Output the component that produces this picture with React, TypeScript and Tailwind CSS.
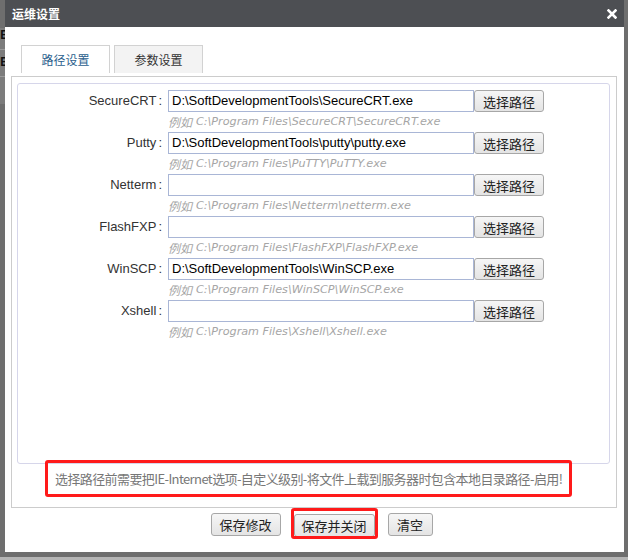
import React from "react";

const rows = [
  { label: "SecureCRT", value: "D:\\SoftDevelopmentTools\\SecureCRT.exe", hint: "C:\\Program Files\\SecureCRT\\SecureCRT.exe" },
  { label: "Putty", value: "D:\\SoftDevelopmentTools\\putty\\putty.exe", hint: "C:\\Program Files\\PuTTY\\PuTTY.exe" },
  { label: "Netterm", value: "", hint: "C:\\Program Files\\Netterm\\netterm.exe" },
  { label: "FlashFXP", value: "", hint: "C:\\Program Files\\FlashFXP\\FlashFXP.exe" },
  { label: "WinSCP", value: "D:\\SoftDevelopmentTools\\WinSCP.exe", hint: "C:\\Program Files\\WinSCP\\WinSCP.exe" },
  { label: "Xshell", value: "", hint: "C:\\Program Files\\Xshell\\Xshell.exe" },
];

function Btn({ children, className = "" }: { children: React.ReactNode; className?: string }) {
  return (
    <button
      className={
        "h-[22px] rounded-[3px] border border-[#a7a7a7] bg-gradient-to-b from-[#f6f6f6] to-[#e4e4e4] text-[13px] leading-none text-[#222] font-['Noto_Sans_CJK_SC',sans-serif] " +
        className
      }
    >
      {children}
    </button>
  );
}

export default function App() {
  return (
    <div className="w-[628px] h-[560px] bg-[#6e6e6e] flex flex-col overflow-hidden">
      <div className="flex h-[552px]">
        {/* left strip showing page behind */}
        <div className="relative w-[5px] shrink-0 overflow-hidden bg-[#6e6e6e]">
          <div className="absolute top-[28px] left-0 w-[5px] h-[76px] bg-[#7c7c7c]" />
          <div className="absolute top-[49px] left-0 w-[5px] h-px bg-[#9a9a9a]" />
          <div className="absolute top-[76px] left-0 w-[5px] h-px bg-[#9a9a9a]" />
          <span className="absolute top-[29px] -left-[3px] text-[12px] font-bold leading-[12px] text-[#111] font-['Liberation_Sans',sans-serif]">IE</span>
          <span className="absolute top-[56px] -left-[3px] text-[12px] font-bold leading-[12px] text-[#111] font-['Liberation_Sans',sans-serif]">IE</span>
        </div>

        {/* dialog */}
        <div className="w-[619px] shrink-0 flex flex-col bg-white">
          <div className="h-[27px] bg-[#4d4f53] flex items-center justify-between pl-[7px] pr-[7px]">
            <span className="text-[12px] font-bold text-white leading-none font-['Noto_Sans_CJK_SC',sans-serif]">运维设置</span>
            <svg width="10" height="10" viewBox="0 0 10 10" className="mt-[1px]">
              <path d="M1.5 1.5 L8.5 8.5 M8.5 1.5 L1.5 8.5" stroke="#ffffff" strokeWidth="2.6" strokeLinecap="square" />
            </svg>
          </div>

          <div className="flex flex-col pl-[6px] pr-[7px] pt-[18px]">
            {/* tabs */}
            <div className="flex gap-[4px] pl-[10px] h-[28px]">
              <div className="w-[89px] h-[28px] border border-b-0 border-[#d2d2d2] bg-white flex items-center justify-center text-[12px] text-[#2c5f8e] font-['Noto_Sans_CJK_SC',sans-serif]">
                路径设置
              </div>
              <div className="w-[89px] h-[28px] border border-b-0 border-[#d2d2d2] bg-[#f3f3f3] flex items-center justify-center text-[12px] text-[#333] font-['Noto_Sans_CJK_SC',sans-serif]">
                参数设置
              </div>
            </div>

            {/* outer panel */}
            <div className="mt-[3px] h-[432px] border border-[#cccccc] flex flex-col pt-[6px] pl-[5px] pr-[6px]">
              <div className="h-[381px] border border-[#d6d6ea] rounded-[3px] pt-[6px] flex flex-col">
                {rows.map((r) => (
                  <div key={r.label} className="h-[42px] flex flex-col">
                    <div className="flex items-center h-[22px]">
                      <div className="w-[150px] text-right text-[13px] text-[#333] font-['Liberation_Sans',sans-serif] pr-[6px]">
                        {r.label}
                        <span className="ml-[2px]">:</span>
                      </div>
                      <div className="w-[306px] h-[22px] border border-[#a9b6d6] bg-white flex items-center pl-[3px] text-[13px] text-black font-['Liberation_Sans',sans-serif] whitespace-nowrap overflow-hidden">
                        {r.value}
                      </div>
                      <Btn className="w-[70px]">选择路径</Btn>
                    </div>
                    <div className="h-[20px] flex items-center pl-[150px] text-[11.2px] italic text-[#a6a6a6] font-['DejaVu_Sans','Noto_Sans_CJK_SC',sans-serif] whitespace-nowrap">
                      <span className="font-['Noto_Sans_CJK_SC',sans-serif] text-[12px] mr-[4px]">例如</span>
                      {r.hint}
                    </div>
                  </div>
                ))}
              </div>

              {/* warning with red annotation */}
              <div className="relative z-10 -mt-[4px] ml-[28px] w-[527px] h-[37px] border-[3px] border-[#ff1a1a] rounded-[3px] flex items-center pl-[7px] text-[13px] tracking-[-0.6px] text-[#777] font-['Noto_Sans_CJK_SC',sans-serif] whitespace-nowrap">
                选择路径前需要把IE-Internet选项-自定义级别-将文件上载到服务器时包含本地目录路径-启用!
              </div>
            </div>

            {/* bottom buttons */}
            <div className="mt-[5px] flex justify-center pl-[15px] gap-[13px]">
              <Btn className="w-[70px] h-[23px]">保存修改</Btn>
              <div className="relative">
                <Btn className="w-[81px] h-[23px]">保存并关闭</Btn>
                <div className="absolute -left-[3px] -right-[3px] -top-[5px] -bottom-[2px] border-[3px] border-[#ff1a1a] rounded-[3px] pointer-events-none" />
              </div>
              <Btn className="w-[45px] h-[23px]">清空</Btn>
            </div>
          </div>
        </div>

        <div className="w-[4px] shrink-0 bg-[#6e6e6e]" />
      </div>
      <div className="h-[5px] bg-[#6e6e6e]" />
      <div className="h-[3px] bg-[#b5b5b5]" />
    </div>
  );
}
